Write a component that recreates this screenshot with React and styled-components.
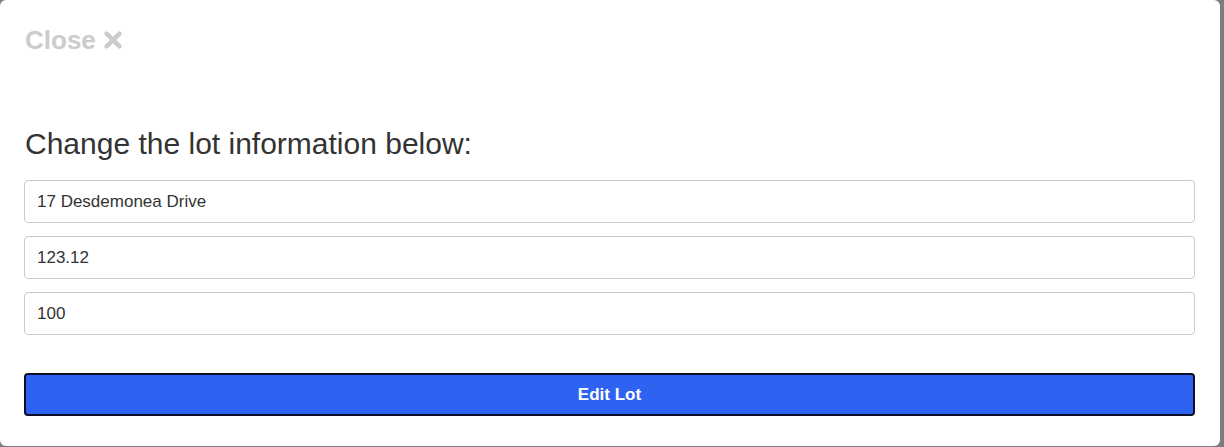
import React, { useState } from 'react';
import styled, { createGlobalStyle } from 'styled-components';

const GlobalStyle = createGlobalStyle`
  html, body {
    margin: 0;
    padding: 0;
    background-color: #7d7d7d;
    font-family: "Liberation Sans", Arial, sans-serif;
  }
`;

const Modal = styled.div`
  box-sizing: border-box;
  width: 1220px;
  height: 446px;
  background-color: #ffffff;
  border-radius: 6px;
  padding: 24px 25px 0 24px;
`;

const CloseButton = styled.button`
  display: flex;
  align-items: center;
  gap: 8px;
  padding: 0;
  margin: 0 0 0 1px;
  border: none;
  background: none;
  color: #cccccc;
  font-family: "Liberation Sans", Arial, sans-serif;
  font-size: 26px;
  font-weight: bold;
  line-height: 32px;
  cursor: pointer;
`;

const Heading = styled.h2`
  margin: 70px 0 18px 1px;
  font-size: 30px;
  font-weight: normal;
  line-height: 36px;
  color: #333333;
`;

const Form = styled.form`
  display: flex;
  flex-direction: column;
`;

const Input = styled.input`
  box-sizing: border-box;
  width: 100%;
  height: 43px;
  margin-bottom: 13px;
  padding: 0 12px;
  border: 1px solid #cccccc;
  border-radius: 4px;
  font-family: "Liberation Sans", Arial, sans-serif;
  font-size: 17px;
  color: #333333;
  outline: none;
`;

const SubmitButton = styled.button`
  box-sizing: border-box;
  width: 100%;
  height: 43px;
  margin-top: 25px;
  border: 2px solid #0b1028;
  border-radius: 4px;
  background-color: #2e62f0;
  color: #ffffff;
  font-family: "Liberation Sans", Arial, sans-serif;
  font-size: 17px;
  font-weight: bold;
  cursor: pointer;
`;

function TimesIcon() {
  return (
    <svg width="18" height="18" viewBox="0 0 18 18">
      <path d="M2.6 2.6 L15.4 15.4 M15.4 2.6 L2.6 15.4" stroke="#cccccc" strokeWidth="4.4" strokeLinecap="round" />
    </svg>
  );
}

export default function App() {
  const [address, setAddress] = useState('17 Desdemonea Drive');
  const [size, setSize] = useState('123.12');
  const [price, setPrice] = useState('100');

  return (
    <>
      <GlobalStyle />
      <Modal>
        <CloseButton type="button">
          Close <TimesIcon />
        </CloseButton>
        <Heading>Change the lot information below:</Heading>
        <Form onSubmit={(e) => e.preventDefault()}>
          <Input value={address} onChange={(e) => setAddress(e.target.value)} />
          <Input value={size} onChange={(e) => setSize(e.target.value)} />
          <Input value={price} onChange={(e) => setPrice(e.target.value)} />
          <SubmitButton type="submit">Edit Lot</SubmitButton>
        </Form>
      </Modal>
    </>
  );
}
